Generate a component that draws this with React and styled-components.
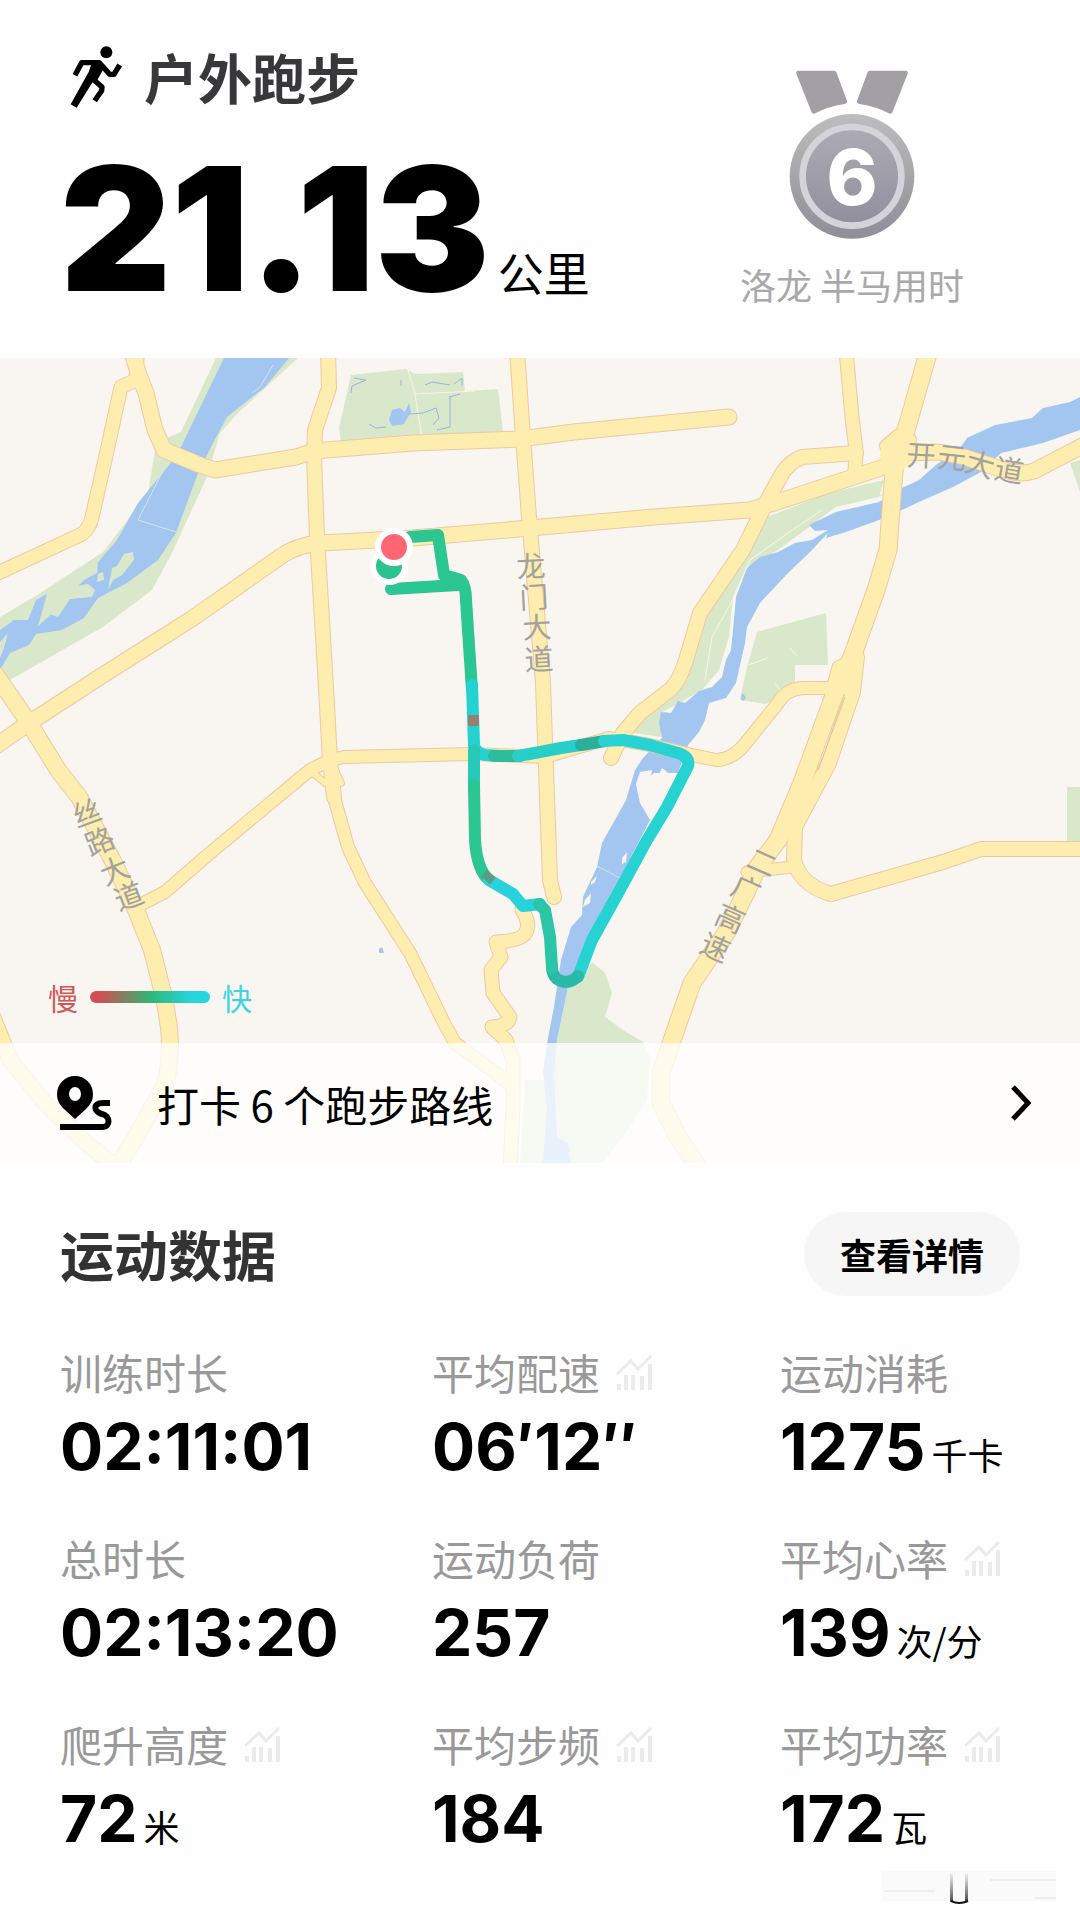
import styled, { createGlobalStyle } from "styled-components";

const GlobalStyle = createGlobalStyle`
  * {
    box-sizing: border-box;
  }
  body {
    margin: 0;
    background: #fefefe;
    color: #000;
    font-family: Inter, "Noto Sans CJK SC", sans-serif;
  }
  h1, h2, h3, p, dl, dt, dd {
    margin: 0;
    font-weight: 400;
  }
`;

const Header = styled.header`
  display: flex;
  justify-content: space-between;
  padding: 38px 116px 40px 60px;
`;

const Title = styled.h1`
  display: flex;
  align-items: center;
  gap: 22px;
  height: 78px;
  padding-left: 10px;
  color: #38373c;
  font-family: "Noto Sans CJK SC", sans-serif;
  font-size: 54px;
  font-weight: 700;
  line-height: 78px;
`;

const Distance = styled.p`
  display: flex;
  align-items: baseline;
  gap: 8px;
  padding-top: 22px;
`;

const DistanceNumber = styled.strong`
  font-size: 172px;
  font-weight: 900;
  line-height: 180px;
`;

const DistanceUnit = styled.span`
  font-family: "Noto Sans CJK SC", sans-serif;
  font-size: 46px;
  line-height: 60px;
`;

const Award = styled.div`
  display: flex;
  flex-direction: column;
  align-items: center;
  gap: 18px;
  padding-top: 32px;
  color: #a9a9a9;
  font-family: "Noto Sans CJK SC", sans-serif;
  font-size: 36px;
  line-height: 52px;
`;

const MapPanel = styled.section`
  display: grid;
  background: #f9f6f1;
`;

const MapDrawing = styled.svg`
  grid-area: 1 / 1;
  display: block;
  width: 100%;
  height: auto;
`;

const MapFooter = styled.div`
  grid-area: 1 / 1;
  align-self: end;
  z-index: 1;
`;

const Legend = styled.div`
  display: flex;
  align-items: center;
  gap: 12px;
  padding: 0 48px 24px;
  font-family: "Noto Sans CJK SC", sans-serif;
  font-size: 30px;
  line-height: 44px;
`;

const Slow = styled.span`
  color: #d2575b;
`;

const Fast = styled.span`
  color: #3fd3e2;
`;

const LegendBar = styled.span`
  width: 120px;
  height: 12px;
  border-radius: 6px;
  background: linear-gradient(90deg, #d04f52 8%, #2fb673 50%, #25d6e0 85%);
`;

const RouteLink = styled.a`
  display: flex;
  align-items: center;
  gap: 44px;
  height: 120px;
  padding: 0 48px 0 57px;
  background: rgba(255, 255, 255, 0.76);
  color: #000;
  font-size: 42px;
  text-decoration: none;
`;

const RouteText = styled.span`
  flex: 1;
  font-family: "Noto Sans CJK SC", sans-serif;
`;

const DataSection = styled.section`
  padding: 49px 60px 0;
`;

const DataHeader = styled.div`
  display: flex;
  align-items: center;
  justify-content: space-between;
`;

const DataTitle = styled.h2`
  color: #333;
  font-family: "Noto Sans CJK SC", sans-serif;
  font-size: 54px;
  font-weight: 700;
  line-height: 78px;
`;

const DetailButton = styled.button`
  height: 84px;
  padding: 0 36px;
  border: 0;
  border-radius: 42px;
  background: #f6f6f6;
  color: #000;
  font-family: "Noto Sans CJK SC", sans-serif;
  font-size: 36px;
  font-weight: 700;
`;

const Metrics = styled.dl`
  display: grid;
  grid-template-columns: 31fr 29fr 20fr;
  row-gap: 36px;
  padding-top: 46px;
`;

const Metric = styled.div`
  white-space: nowrap;
`;

const MetricLabel = styled.dt`
  display: flex;
  align-items: center;
  gap: 16px;
  color: #999;
  font-family: "Noto Sans CJK SC", sans-serif;
  font-size: 42px;
  line-height: 60px;
`;

const MetricValue = styled.dd`
  display: flex;
  align-items: baseline;
  gap: 6px;
  font-size: 64px;
  font-weight: 700;
  line-height: 90px;
`;

const MetricUnit = styled.span`
  font-family: "Noto Sans CJK SC", sans-serif;
  font-size: 36px;
  font-weight: 400;
  line-height: 50px;
`;

const Footer = styled.footer`
  display: flex;
  justify-content: flex-end;
  padding: 4px 24px 0;
`;

const parks = [
  "M351 375 406 369 415 374 463 372 465 391 498 389 503 432 341 442 339 428Z",
  "M216 358 181 432 169 437 155 450 148 493 103 552 34 597 0 617V684L10 680 103 627 152 590 172 553 207 477 220 433 238 413 298 358Z",
  "M884 480 879 497 836 507 805 530 778 550 747 567 733 597 729 637 719 670 702 690 661 713V737L633 733 643 710 685 683 695 633 747 553 767 517 829 493Z",
  "M757 632 826 613 828 665 795 665V683L778 697 766 704 740 700 747 667Z",
  "M1067 787H1080V844H1067Z",
  "M1070 463 1080 460V492Z",
  "M593 963 605 973 612 993 605 1017 623 1030 643 1042 650 1057 647 1100 623 1137 602 1163H543L557 1040 568 987 580 970Z",
  "M525 1080H550V1163H520Z",
];

const waters = [
  "M224 358 207 393 181 447 169 465 138 503 117 540 98 562 97 573 84 580 74 590 60 606 47 618 38 626 47 594 36 600 28 620 14 620 0 630V670L10 653 29 645 36 634 62 630 84 618 98 598 127 583 158 560 176 533 198 473 213 443 227 417 265 387 289 358Z",
  "M1080 397 1070 402 1043 408 1032 418 995 425 967 438 960 448 936 465 919 480 902 488 879 502 836 512 809 525 815 531 828 530 812 540 795 543 778 552 760 557 747 568 736 597 733 630 731 650 726 660 722 677 712 687 699 691 685 703 678 701 671 713 661 712 659 723 662 738 643 758 635 770 626 800 602 843 597 867 583 897 582 915 571 927 561 960 554 1007 547 1043 543 1073 547 1107 543 1163H571L568 1143 557 1137 554 1073 557 1040 568 987 578 970 619 880 650 820 640 803 637 788 654 773 678 773 688 745 699 732 705 720 709 703 726 698 736 683 745 643 747 627 760 603 788 573 809 553 828 533 826 538 846 532 879 520 902 510 919 502 953 487 981 472 1001 453 1043 443 1080 430Z",
  "M389 420 392 410 400 408 405 412 409 403 411 412 404 424 392 426Z",
  "M379 949 382 947 384 953H379Z",
  "M742 693 746 697 744 701 741 699Z",
];

const islands = [
  "M640 772 652 770 650 782 644 795 638 793 636 784Z",
  "M653 788 662 768 672 776 660 800Z",
  "M622 858 627 852 626 862 622 864Z",
  "M591 882 597 876 595 882 591 885Z",
  "M585 900 591 893 590 903 583 907Z",
];

const banks = [
  "M117 566 124 554 133 552 134 560 122 575 113 580 108 590 112 568Z",
  "M98 574 103 572 104 580 97 582Z",
  "M58 595 76 586 88 584 95 590 92 597 70 599 58 617 44 612 50 601Z",
  "M0 642 8 633 4 648 0 658Z",
];

const roads = [
  { d: "M137 358 136 380 121 387 105 460 93 513Q90 530 80 535L-4 574", w: 13 },
  { d: "M131 350 139 375 146 393 155 430 164 450 200 465 215 470 296 457 314 451 413 443 520 439 574 432 729 417", w: 15 },
  { d: "M328 350 329 388 315 430 314 457 317 537 325 670 330 760 334 797", w: 14 },
  { d: "M334 797 348 847 365 883 410 953 444 1023 455 1043 496 1073 513 1087", w: 12 },
  { d: "M-4 746 26 725 103 675 193 618 280 557Q296 545 320 543L413 538 530 528 654 517 750 510 774 503 884 467 905 453 939 452 964 457 998 468Q1020 476 1034 471L1084 445", w: 15 },
  { d: "M-4 675 29 723 58 770 79 797 114 863 136 910 152 950 164 997 169 1027Q172 1060 165 1085L134 1140 120 1163", w: 16 },
  { d: "M-8 1015 10 1060 45 1103 86 1143 120 1170", w: 15 },
  { d: "M136 907 165 892 210 853 310 770 330 760 344 757 472 754 545 757 609 738 650 745 692 755 716 760Q732 760 745 744L778 703Q785 690 802 688L845 688", w: 12 },
  { d: "M517 350 523 437 529 517 543 683 546 770 550 880 554 897", w: 14 },
  { d: "M522 910Q532 925 524 935 518 941 496 942L501 957 491 970 493 993 510 1017Q508 1026 492 1027L506 1040 513 1060V1107L510 1170", w: 13 },
  { d: "M846 350 852 417 856 450 855 470", w: 13 },
  { d: "M856 453 802 457Q790 462 783 472L769 497 743 550 700 613 686 660Q680 680 671 689L640 713 623 733 611 758", w: 14 },
  { d: "M929 350 907 427 895 460 893 483 888 550 876 590 852 657 836 690 802 783 778 840 757 868 747 890 726 933 692 983 678 1023 661 1073V1103L678 1137 700 1170", w: 17 },
  { d: "M857 657 853 692 829 763 795 827 794 860Q800 885 831 894L943 862 981 849H1084", w: 14 },
  { d: "M747 872 793 867", w: 11 },
  { d: "M886 446 898 436 910 440", w: 12 },
  { d: "M330 760 341 783 325 783 312 772", w: 6 },
  { d: "M829 690 836 665 857 655", w: 6 },
];

const routeSegments = [
  { d: "M391 589 458 585", color: "#2bc691" },
  { d: "M410 537 438 535 444 575 461 580Q466 586 466 600L472 690", color: "#2bc691" },
  { d: "M472 685 474 745Q476 754 486 755L500 756", color: "#25d2d2" },
  { d: "M474 750 474 790", color: "#27c9b9" },
  { d: "M474 785 475 840Q477 870 489 880", color: "#2bc691" },
  { d: "M489 880 513 894 523 906 540 904", color: "#28d2dc" },
  { d: "M494 756 520 756", color: "#2cbd9b" },
  { d: "M518 756 540 752 561 748 581 745", color: "#27cfc8" },
  { d: "M581 745 605 741", color: "#2aaf98" },
  { d: "M604 741 623 740 650 745 678 753Q690 757 688 766L667 807 647 840 616 897 592 940 578 977", color: "#27d2d3" },
  { d: "M578 976Q568 986 557 979 552 975 552 966", color: "#2bbaa8" },
  { d: "M552 968 550 937 545 910 539 904", color: "#2bc5a7" },
];

const mapLabels = [
  { text: "龙", x: 531, y: 567, angle: -3 },
  { text: "门", x: 534, y: 598, angle: -3 },
  { text: "大", x: 537, y: 628, angle: -3 },
  { text: "道", x: 539, y: 660, angle: -3 },
  { text: "丝", x: 87, y: 814, angle: -20 },
  { text: "路", x: 100, y: 842, angle: -22 },
  { text: "大", x: 115, y: 871, angle: -22 },
  { text: "道", x: 129, y: 897, angle: -20 },
  { text: "开", x: 921, y: 456, angle: 3 },
  { text: "元", x: 952, y: 458, angle: 6 },
  { text: "大", x: 980, y: 465, angle: 16 },
  { text: "道", x: 1009, y: 471, angle: 10 },
  { text: "二", x: 762, y: 863, angle: 24 },
  { text: "广", x: 746, y: 890, angle: 24 },
  { text: "高", x: 730, y: 919, angle: 24 },
  { text: "速", x: 715, y: 948, angle: 24 },
];

const metrics = [
  { label: "训练时长", value: "02:11:01" },
  { label: "平均配速", value: "06′12″", chart: true },
  { label: "运动消耗", value: "1275", unit: "千卡" },
  { label: "总时长", value: "02:13:20" },
  { label: "运动负荷", value: "257" },
  { label: "平均心率", value: "139", unit: "次/分", chart: true },
  { label: "爬升高度", value: "72", unit: "米", chart: true },
  { label: "平均步频", value: "184", chart: true },
  { label: "平均功率", value: "172", unit: "瓦", chart: true },
];

function RunnerIcon() {
  return (
    <svg width="52" height="62" viewBox="62 44 156 186" aria-hidden="true">
      <circle cx="171" cy="63" r="18" />
      <g fill="none" stroke="#000" strokeWidth="16" strokeLinejoin="round">
        <path d="M77 132 97 94H150L181 129H194L211 101" />
        <path d="M134 146 158 167 157 178 136 208" />
      </g>
      <path d="M129 90H152L163 112 144 146 130 152 82 229 64 219 118 122Z" />
    </svg>
  );
}

function Medal() {
  return (
    <svg width="126" height="170" viewBox="327 92 378 510" aria-hidden="true">
      <defs>
        <linearGradient id="rim" x1="0" y1="0" x2="0" y2="1">
          <stop offset="0" stopColor="#bdbdbf" />
          <stop offset="1" stopColor="#8f8d96" />
        </linearGradient>
        <linearGradient id="face" x1="0" y1="0" x2="0" y2="1">
          <stop offset="0" stopColor="#adabb2" />
          <stop offset="1" stopColor="#918f9d" />
        </linearGradient>
      </defs>
      <g fill="#a29fa7" stroke="#a29fa7" strokeWidth="16" strokeLinejoin="round">
        <path d="M357 102H462L493 186Q440 194 402 215Z" />
        <path d="M675 102H570L539 186Q592 194 630 215Z" />
      </g>
      <circle cx="516" cy="411" r="187" fill="url(#rim)" />
      <circle cx="516" cy="411" r="148" fill="url(#face)" stroke="#d5d3da" strokeWidth="20" />
      <text
        x="516"
        y="496"
        fill="#fff"
        fontFamily="Inter, sans-serif"
        fontSize="232"
        fontWeight="800"
        textAnchor="middle"
      >
        6
      </text>
    </svg>
  );
}

function RouteIcon() {
  return (
    <svg width="56" height="54" viewBox="0 0 56 54" aria-hidden="true">
      <path
        fillRule="evenodd"
        d="M18 0a18 18 0 0 1 18 18c0 7-3 11-7 15L18 43 7 33C3 29 0 25 0 18A18 18 0 0 1 18 0Zm0 11a6 7 0 1 0 0 14 6 7 0 0 0 0-14Z"
      />
      <path
        d="M53 27H46C35 27 37 36 45 38 54 40 53 51 46 51H3"
        fill="none"
        stroke="#000"
        strokeWidth="6"
      />
    </svg>
  );
}

function ChevronIcon() {
  return (
    <svg width="22" height="36" viewBox="0 0 22 36" aria-hidden="true">
      <path d="M3 2 18 18 3 34" fill="none" stroke="#000" strokeWidth="5" />
    </svg>
  );
}

function ChartIcon() {
  return (
    <svg width="36" height="36" viewBox="0 0 36 36" aria-hidden="true">
      <g fill="none" stroke="#ebebeb">
        <path d="M1 20 15 7 22 15 35 2" strokeWidth="3" />
        <path d="M3 36V30M10 36V21M17 36V21M26 36V22M34 36V10" strokeWidth="4" />
      </g>
    </svg>
  );
}

function RouteMap() {
  return (
    <MapDrawing viewBox="0 358 1080 805" role="img" aria-label="跑步路线地图">
      <g fill="#d9e8ca">
        {parks.map((d) => (
          <path key={d} d={d} />
        ))}
      </g>
      <g fill="none" stroke="#f9f6e4" strokeWidth="1">
        <path d="M408 370 415 394 422 438M415 394 475 391" />
        <path d="M822 510 788 533 750 560 731 603 712 637 705 680" />
        <path d="M748 665 768 658M790 648 797 656M775 683 780 690" />
      </g>
      <g fill="#a2c6f0">
        {waters.map((d) => (
          <path key={d} d={d} />
        ))}
      </g>
      <g fill="none" stroke="#93b6dd" strokeWidth="1">
        <path d="M369 424 376 428 386 427M409 414 423 413 436 408 439 418 433 425M450 397V427L437 430M449 397 460 394" />
        <path d="M354 378 366 380 352 386 351 393M425 385 432 382 450 385M454 384 462 378 462 385M401 380V386" />
      </g>
      <g fill="#d9e8ca">
        {banks.map((d) => (
          <path key={d} d={d} />
        ))}
      </g>
      <g fill="#f9f6f1">
        {islands.map((d) => (
          <path key={d} d={d} />
        ))}
      </g>
      <path
        d="M273 365 260 387 252 393M165 467 138 520 176 532M597 866 620 878M902 488 879 496"
        fill="none"
        stroke="#d4e6e6"
        strokeWidth="1"
      />
      <g fill="none" strokeLinecap="round" strokeLinejoin="round">
        {roads.map(({ d, w }) => (
          <path key={d} d={d} stroke="#ecc9a2" strokeWidth={w + 2} />
        ))}
        {roads.map(({ d, w }) => (
          <path key={d} d={d} stroke="#fdedaf" strokeWidth={w} />
        ))}
      </g>
      <circle cx="896" cy="455" r="16" fill="#fdedaf" />
      <path d="M845 697 818 770" stroke="#ddc48e" />
      <g fontFamily="Noto Sans CJK SC, sans-serif" fontSize="29" fill="#a3a29c" textAnchor="middle">
        {mapLabels.map(({ text, x, y, angle }) => (
          <text key={text + x} transform={`translate(${x} ${y}) rotate(${angle})`} dy="10">
            {text}
          </text>
        ))}
      </g>
      <g fill="none" strokeLinecap="round" strokeLinejoin="round" strokeWidth="12">
        {routeSegments.map(({ d, color }) => (
          <path key={d} d={d} stroke={color} />
        ))}
      </g>
      <path d="M468 715H479V726H468Z" fill="#94816f" />
      <path d="M484 873 493 881" stroke="#5a9c86" strokeWidth="9" />
      <circle cx="389" cy="566" r="16" fill="#2bc28d" stroke="#fff" strokeWidth="6" />
      <circle cx="394" cy="547" r="16" fill="#fe6673" stroke="#fff" strokeWidth="6" />
    </MapDrawing>
  );
}

function Watermark() {
  return (
    <svg width="176" height="40" viewBox="880 1862 176 40" aria-hidden="true">
      <defs>
        <linearGradient id="post" x1="0" y1="0" x2="0" y2="1">
          <stop offset="0" stopColor="#666" stopOpacity="0.1" />
          <stop offset="1" stopColor="#444" />
        </linearGradient>
      </defs>
      <path d="M882 1865H1056V1895H882Z" fill="#fafafa" />
      <path d="M884 1885H935M990 1874H1056M1035 1892H1056" stroke="#ededed" strokeWidth="2" />
      <path d="M950 1868H953V1896H950ZM965 1868H968V1896H965Z" fill="url(#post)" />
      <path d="M951 1895Q959 1899 968 1895" fill="none" stroke="#111" strokeWidth="2" />
    </svg>
  );
}

function App() {
  return (
    <>
      <GlobalStyle />
      <Header>
        <div>
          <Title>
            <RunnerIcon />
            户外跑步
          </Title>
          <Distance>
            <DistanceNumber>21.13</DistanceNumber>
            <DistanceUnit>公里</DistanceUnit>
          </Distance>
        </div>
        <Award>
          <Medal />
          <p>洛龙 半马用时</p>
        </Award>
      </Header>
      <MapPanel>
        <RouteMap />
        <MapFooter>
          <Legend>
            <Slow>慢</Slow>
            <LegendBar />
            <Fast>快</Fast>
          </Legend>
          <RouteLink href="#routes">
            <RouteIcon />
            <RouteText>打卡 6 个跑步路线</RouteText>
            <ChevronIcon />
          </RouteLink>
        </MapFooter>
      </MapPanel>
      <DataSection>
        <DataHeader>
          <DataTitle>运动数据</DataTitle>
          <DetailButton type="button">查看详情</DetailButton>
        </DataHeader>
        <Metrics>
          {metrics.map(({ label, value, unit, chart }) => (
            <Metric key={label}>
              <MetricLabel>
                {label}
                {chart && <ChartIcon />}
              </MetricLabel>
              <MetricValue>
                {value}
                {unit && <MetricUnit>{unit}</MetricUnit>}
              </MetricValue>
            </Metric>
          ))}
        </Metrics>
      </DataSection>
      <Footer>
        <Watermark />
      </Footer>
    </>
  );
}

export default App;
